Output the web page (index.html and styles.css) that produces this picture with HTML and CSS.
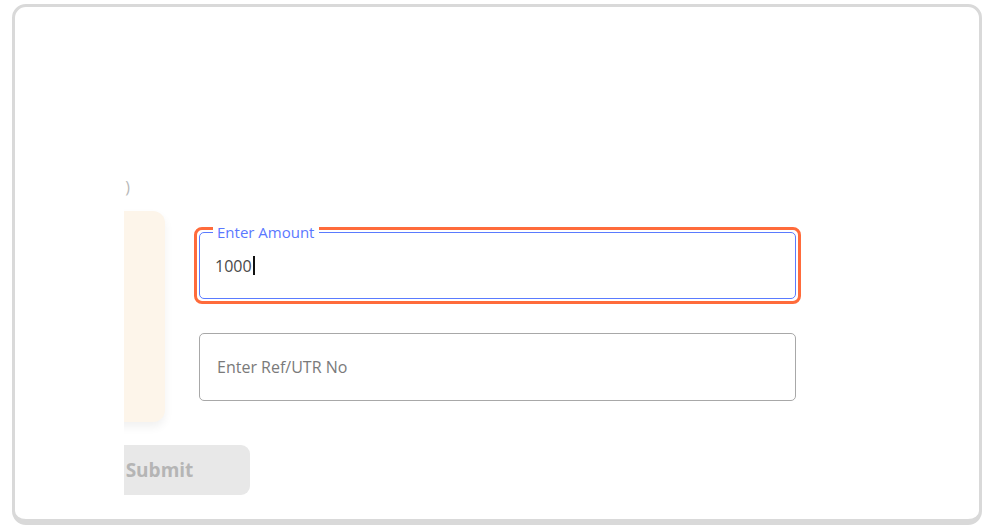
FILE: index.html
```html
<!DOCTYPE html>
<html lang="en">
<head>
<meta charset="utf-8">
<title>Deposit</title>
<link rel="stylesheet" href="styles.css">
</head>
<body>
<div class="frame">
  <div class="clip">
    <div class="content">
      <div class="heading-row"><span class="heading">Payment Details (UPI)</span></div>
      <div class="main-row">
        <div class="card"></div>
        <div class="form">
          <div class="ring">
            <div class="field active">
              <span class="legend">Enter Amount</span>
              <span class="value">1000</span><span class="caret"></span>
            </div>
          </div>
          <input class="field plain" type="text" placeholder="Enter Ref/UTR No">
        </div>
      </div>
      <button class="submit" type="button">Submit</button>
    </div>
  </div>
</div>
</body>
</html>
```

FILE: styles.css
```css
* { box-sizing: border-box; }
html, body { margin: 0; padding: 0; background: #ffffff; }
body { font-family: "Open Sans", "Noto Sans", sans-serif; overflow: hidden; }

.frame {
  margin: 4px 0 0 12px;
  width: 970px;
  height: 521px;
  border: 3px solid #d9d9d9;
  border-bottom-width: 6px;
  border-radius: 14px;
  overflow: hidden;
  background: #ffffff;
}

.clip {
  margin-left: 109px;
  margin-top: 170px;
  width: 840px;
  overflow: hidden;
  padding-bottom: 20px;
}

.content {
  margin-left: -100px;
}

.heading-row {
  width: 111px;
  height: 20px;
  display: flex;
  justify-content: flex-end;
  white-space: nowrap;
}
.heading {
  font-size: 16px;
  line-height: 20px;
  letter-spacing: 5px;
  color: #b8b8b8;
}

.main-row {
  display: flex;
  align-items: flex-start;
  margin-top: 14px;
}

.card {
  width: 141px;
  height: 211px;
  background: #fdf5ea;
  border-radius: 12px;
  box-shadow: 0 5px 10px rgba(0, 0, 0, 0.06);
  flex: none;
}

.form {
  margin-left: 29px;
  padding-top: 16px;
  display: flex;
  flex-direction: column;
}

.ring {
  width: 607px;
  border: 3px solid #ff6b3b;
  border-radius: 8px;
  padding: 2px;
}

.field {
  position: relative;
  width: 597px;
  height: 67px;
  border-radius: 5px;
  font-family: "Open Sans", "Noto Sans", sans-serif;
  font-size: 16px;
}

.field.active {
  border: 1px solid #5a7bff;
  display: flex;
  align-items: center;
  padding-left: 15px;
  color: #4a4a4a;
}

.legend {
  position: absolute;
  left: 13px;
  top: -9px;
  padding: 0 5px 0 4px;
  background: #ffffff;
  font-size: 15px;
  line-height: 17px;
  color: #5a78ff;
  clip-path: inset(3px 0 0 0);
}

.caret {
  display: inline-block;
  width: 2px;
  height: 19px;
  background: #111111;
  margin-left: 1px;
}

.field.plain {
  margin-top: 29px;
  margin-left: 5px;
  height: 68px;
  border: 1px solid #a8a8a8;
  padding: 0 17px;
  outline: none;
  color: #444444;
  background: #ffffff;
}
.field.plain::placeholder { color: #7a7a7a; opacity: 1; }

.submit {
  display: block;
  margin: 23px 0 0 45px;
  width: 181px;
  height: 50px;
  border: none;
  border-radius: 9px;
  background: #e8e8e8;
  color: #b5b5b5;
  font-family: "Open Sans", "Noto Sans", sans-serif;
  font-weight: 700;
  font-size: 19px;
  padding: 0;
  cursor: default;
}
```
